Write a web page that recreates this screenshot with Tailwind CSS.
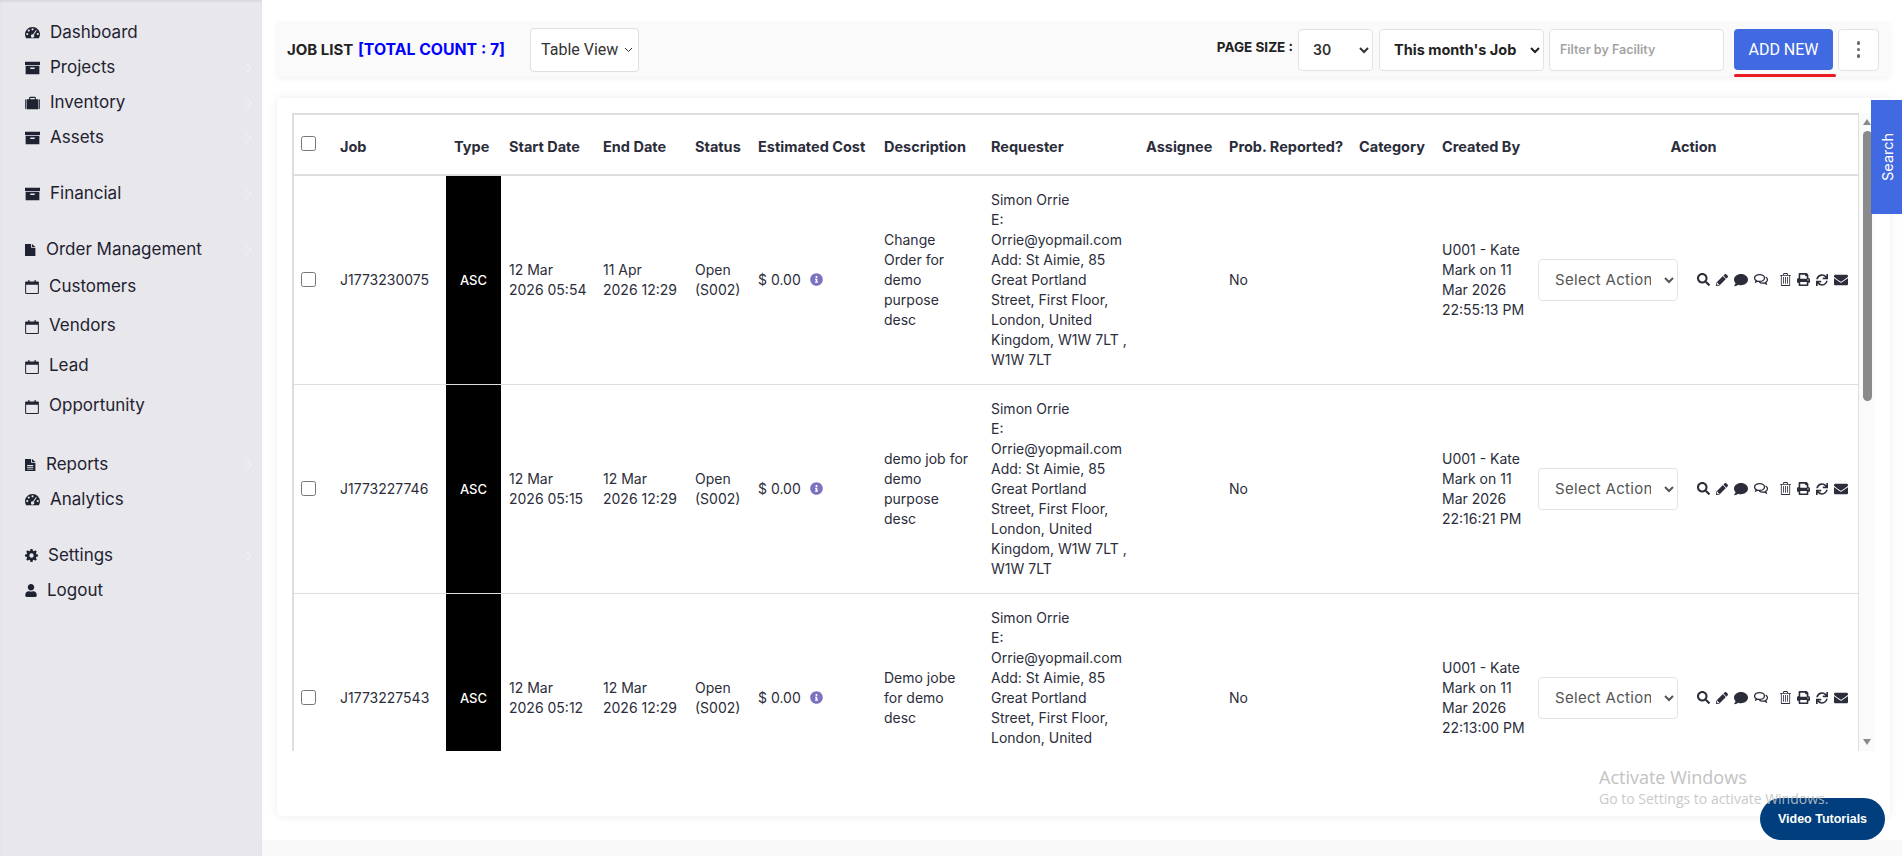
<!DOCTYPE html>
<html>
<head>
<meta charset="UTF-8" />
<title>Job List</title>
<script src="https://cdn.jsdelivr.net/npm/@tailwindcss/browser@4"></script>
</head>
<body class="h-[856px] w-[1902px] overflow-hidden bg-[#f9f9f9] font-['Inter',sans-serif] text-[#212529]">

<svg class="hidden">
  <symbol id="i-dash" viewBox="0 0 24 20"><path fill-rule="evenodd" d="M12 1C5.400 1 0 6.300 0 12.800c0 2.300.7 4.400 1.800 6.200h20.400c1.100-1.800 1.800-3.900 1.800-6.200C24 6.300 18.600 1 12 1zM12 3.200a1.700 1.700 0 1 1 0 3.400 1.700 1.700 0 0 1 0-3.400zM6 5.200a1.700 1.700 0 1 1 0 3.400 1.700 1.700 0 0 1 0-3.400zM3.600 10.800a1.700 1.700 0 1 1 0 3.400 1.700 1.700 0 0 1 0-3.400zM20.400 10.800a1.700 1.700 0 1 1 0 3.400 1.700 1.700 0 0 1 0-3.400zM17.600 5.800l1.200.8-4.700 7.400a2.600 2.600 0 1 1-1.500-.9z"/></symbol>
  <symbol id="i-archive" viewBox="0 0 24 22"><path fill-rule="evenodd" d="M0 1h24v5H0zM1 7.500h22V21H1zM8.500 10v2.500h7V10z"/></symbol>
  <symbol id="i-case" viewBox="0 0 24 22"><path fill-rule="evenodd" d="M8 1h8l1.500 1.500V5H21.500V21h-19V5H6.500V2.500zM8.300 2.800V5h7.400V2.800zM0 6.500C0 5.700.6 5 1.300 5v16C.6 21 0 20.300 0 19.500zM22.700 5C23.400 5 24 5.700 24 6.500v13c0 .8-.6 1.500-1.300 1.500z"/></symbol>
  <symbol id="i-file" viewBox="0 0 18 22"><path d="M0 1h10v6.500h7V21H0zM11.500 1L17 6h-5.500z"/></symbol>
  <symbol id="i-filet" viewBox="0 0 18 22"><path fill-rule="evenodd" d="M0 1h10v6.500h7V21H0zM3.500 11v1.500h10V11zM3.500 14v1.500h10V14zM3.500 17v1.500h10V17zM11.500 1L17 6h-5.500z"/></symbol>
  <symbol id="i-cal" viewBox="0 0 22 24"><path fill-rule="evenodd" d="M1.500 4H5V1.500h2V4h8V1.500h2V4h3.500C21.300 4 22 4.700 22 5.500v17c0 .8-.7 1.500-1.500 1.500h-19C.7 24 0 23.300 0 22.500v-17C0 4.700.7 4 1.500 4zM1.600 9v13.400h18.800V9z"/></symbol>
  <symbol id="i-cog" viewBox="0 0 512 512"><path fill-rule="evenodd" d="M215 0h82l12 66 44 18 55-38 58 58-38 55 18 44 66 12v82l-66 12-18 44 38 55-58 58-55-38-44 18-12 66h-82l-12-66-44-18-55 38-58-58 38-55-18-44-66-12v-82l66-12 18-44-38-55 58-58 55 38 44-18zM256 170a86 86 0 1 0 0 172 86 86 0 0 0 0-172z"/></symbol>
  <symbol id="i-user" viewBox="0 0 448 512"><path d="M224 256c70.700 0 128-57.300 128-128S294.700 0 224 0 96 57.300 96 128s57.300 128 128 128zm89.600 32h-16.700c-22.200 10.200-46.900 16-72.900 16s-50.600-5.800-72.900-16h-16.700C60.200 288 0 348.200 0 422.400V464c0 26.500 21.500 48 48 48h352c26.500 0 48-21.500 48-48v-41.600c0-74.200-60.200-134.400-134.400-134.400z"/></symbol>
  <symbol id="i-search" viewBox="0 0 512 512"><path d="M505 442.700L405.300 343c-4.500-4.500-10.600-7-17-7H372c27.600-35.300 44-79.700 44-128C416 93.100 322.900 0 208 0S0 93.100 0 208s93.100 208 208 208c48.300 0 92.700-16.400 128-44v16.300c0 6.400 2.500 12.500 7 17l99.700 99.700c9.400 9.400 24.600 9.400 33.900 0l28.300-28.300c9.400-9.400 9.400-24.600.1-34zM208 336c-70.700 0-128-57.200-128-128 0-70.700 57.200-128 128-128 70.700 0 128 57.200 128 128 0 70.700-57.200 128-128 128z"/></symbol>
  <symbol id="i-pencil" viewBox="0 0 512 512"><path fill-rule="evenodd" d="M497.900 142.100l-46.100 46.100c-4.700 4.700-12.300 4.700-17 0l-111-111c-4.700-4.700-4.700-12.300 0-17l46.100-46.100c18.700-18.700 49.100-18.700 67.900 0l60.100 60.100c18.800 18.700 18.800 49.100 0 67.900zM284.200 99.800L21.600 362.400.4 483.900c-2.900 16.400 11.400 30.600 27.800 27.800l121.500-21.300 262.600-262.600c4.700-4.700 4.700-12.300 0-17l-111-111c-4.800-4.700-12.400-4.700-17.100 0zM88 424h48v36l-64.500 11.300-31.100-31.100L51.700 376H88z"/></symbol>
  <symbol id="i-comment" viewBox="0 0 512 512"><path d="M256 32C114.600 32 0 125.100 0 240c0 49.600 21.400 95 57 130.700C44.500 421.100 2.700 466 2.200 466.500c-2.200 2.300-2.800 5.700-1.500 8.700S4.800 480 8 480c66.300 0 116-31.800 140.600-51.400 32.700 12.300 69 19.400 107.400 19.400 141.400 0 256-93.100 256-208S397.400 32 256 32z"/></symbol>
  <symbol id="i-comments" viewBox="0 0 24 22"><path fill="none" stroke="currentColor" stroke-width="2.200" d="M9.500 2.500C4.800 2.500 1 5.100 1 8.400c0 1.800 1.100 3.400 2.900 4.500L3 15.300l3.200-1.500c1 .3 2.100.5 3.300.5 4.700 0 8.500-2.600 8.500-5.900s-3.800-5.900-8.500-5.900z"/><path fill="none" stroke="currentColor" stroke-width="2.200" d="M20 6.800c1.800 1.100 3 2.700 3 4.500 0 1.800-1.100 3.400-2.900 4.500l.9 2.700-3.500-1.800c-3 .8-6.300.3-8.500-1.100"/></symbol>
  <symbol id="i-trash" viewBox="0 0 20 24"><path fill-rule="evenodd" d="M6.500 0h7L15 3.500h5V5h-1.500v17c0 1.100-.9 2-2 2h-13c-1.100 0-2-.9-2-2V5H0V3.500h5zM7 3.500h6l-.7-1.800H7.700zM3 5v17.300h14V5zM5.500 7.500H7V20H5.500zM9.300 7.500h1.500V20H9.300zM13 7.500h1.500V20H13z"/></symbol>
  <symbol id="i-print" viewBox="0 0 512 512"><path d="M448 192V77.250c0-8.490-3.370-16.620-9.370-22.630L393.370 9.370c-6-6-14.140-9.370-22.630-9.370H96C78.330 0 64 14.330 64 32v160c-35.350 0-64 28.650-64 64v112c0 8.840 7.160 16 16 16h48v96c0 17.670 14.330 32 32 32h320c17.670 0 32-14.330 32-32v-96h48c8.840 0 16-7.160 16-16V256c0-35.350-28.650-64-64-64zm-64 256H128v-96h256v96zm0-224H128V64h192v48c0 8.840 7.160 16 16 16h48v96zm48 72c-13.250 0-24-10.750-24-24 0-13.260 10.750-24 24-24s24 10.740 24 24c0 13.250-10.750 24-24 24z"/></symbol>
  <symbol id="i-sync" viewBox="0 0 512 512"><path d="M440.650 12.570l4 82.770A247.160 247.160 0 0 0 255.830 8C134.730 8 33.910 94.920 12.290 209.820A12 12 0 0 0 24.090 224h49.050a12 12 0 0 0 11.670-9.260 175.910 175.910 0 0 1 317-56.940l-101.460-4.860a12 12 0 0 0-12.570 12v47.410a12 12 0 0 0 12 12H500a12 12 0 0 0 12-12V12a12 12 0 0 0-12-12h-47.370a12 12 0 0 0-11.980 12.570zM255.830 432a175.610 175.610 0 0 1-146-77.800l101.800 4.870a12 12 0 0 0 12.570-12v-47.400a12 12 0 0 0-12-12H12a12 12 0 0 0-12 12V500a12 12 0 0 0 12 12h47.350a12 12 0 0 0 12-12.600l-4.150-82.570A247.170 247.170 0 0 0 255.830 504c121.110 0 221.930-86.920 243.550-201.820a12 12 0 0 0-11.800-14.180h-49.050a12 12 0 0 0-11.670 9.260A175.860 175.860 0 0 1 255.830 432z"/></symbol>
  <symbol id="i-mail" viewBox="0 0 512 512"><path d="M502.300 190.800c3.900-3.100 9.700-.2 9.700 4.700V400c0 26.500-21.500 48-48 48H48c-26.500 0-48-21.500-48-48V195.600c0-5 5.700-7.800 9.700-4.700 22.400 17.400 52.100 39.500 154.100 113.600 21.100 15.400 56.700 47.800 92.200 47.600 35.700.3 72-32.800 92.300-47.600 102-74.100 131.600-96.300 154-113.700zM256 320c23.200.4 56.600-29.200 73.400-41.400 132.700-96.300 142.800-104.700 173.400-128.700 5.800-4.500 9.200-11.500 9.200-18.900v-19c0-26.500-21.500-48-48-48H48C21.500 64 0 85.500 0 112v19c0 7.400 3.400 14.300 9.200 18.900 30.600 23.900 40.700 32.400 173.400 128.700 16.800 12.200 50.200 41.800 73.400 41.400z"/></symbol>
  <symbol id="i-info" viewBox="0 0 512 512"><path d="M256 8C119 8 8 119 8 256s111 248 248 248 248-111 248-248S393 8 256 8zm0 110c23.200 0 42 18.800 42 42s-18.800 42-42 42-42-18.800-42-42 18.800-42 42-42zm56 254c0 6.600-5.400 12-12 12h-88c-6.600 0-12-5.400-12-12v-24c0-6.600 5.400-12 12-12h12v-64h-12c-6.600 0-12-5.400-12-12v-24c0-6.600 5.400-12 12-12h64c6.600 0 12 5.400 12 12v100h12c6.600 0 12 5.400 12 12v24z"/></symbol>
  <symbol id="i-chev" viewBox="0 0 8 16"><path fill="none" stroke="currentColor" d="M1 2l6 6-6 6"/></symbol>
</svg>

<div class="flex h-full">
  <!-- sidebar -->
  <aside class="w-[262px] h-full shrink-0 bg-[#e7e7ec] pt-[15px] pl-[25px] pr-[10px] text-[17px] text-[#1f2230] shadow-[inset_0_2px_2px_rgba(0,0,0,0.06)]">
    <a class="flex items-center h-[35px]"><svg class="w-[15px] h-[13px] fill-current mr-[10px]"><use href="#i-dash"/></svg>Dashboard</a>
    <a class="flex items-center h-[35px]"><svg class="w-[15px] h-[14px] fill-current mr-[10px]"><use href="#i-archive"/></svg>Projects<svg class="w-[7px] h-[14px] ml-auto text-white/70"><use href="#i-chev"/></svg></a>
    <a class="flex items-center h-[35px]"><svg class="w-[15px] h-[14px] fill-current mr-[10px]"><use href="#i-case"/></svg>Inventory<svg class="w-[7px] h-[14px] ml-auto text-white/70"><use href="#i-chev"/></svg></a>
    <a class="flex items-center h-[35px]"><svg class="w-[15px] h-[14px] fill-current mr-[10px]"><use href="#i-archive"/></svg>Assets<svg class="w-[7px] h-[14px] ml-auto text-white/70"><use href="#i-chev"/></svg></a>
    <a class="flex items-center h-[35px] mt-[21px]"><svg class="w-[15px] h-[14px] fill-current mr-[10px]"><use href="#i-archive"/></svg>Financial<svg class="w-[7px] h-[14px] ml-auto text-white/70"><use href="#i-chev"/></svg></a>
    <a class="flex items-center h-[35px] mt-[21px]"><svg class="w-[11px] h-[14px] fill-current mr-[10px]"><use href="#i-file"/></svg>Order Management<svg class="w-[7px] h-[14px] ml-auto text-white/70"><use href="#i-chev"/></svg></a>
    <a class="flex items-center h-[39px]"><svg class="w-[14px] h-[15px] fill-current mr-[10px]"><use href="#i-cal"/></svg>Customers</a>
    <a class="flex items-center h-[40px]"><svg class="w-[14px] h-[15px] fill-current mr-[10px]"><use href="#i-cal"/></svg>Vendors</a>
    <a class="flex items-center h-[40px]"><svg class="w-[14px] h-[15px] fill-current mr-[10px]"><use href="#i-cal"/></svg>Lead</a>
    <a class="flex items-center h-[40px]"><svg class="w-[14px] h-[15px] fill-current mr-[10px]"><use href="#i-cal"/></svg>Opportunity</a>
    <a class="flex items-center h-[35px] mt-[21px]"><svg class="w-[11px] h-[14px] fill-current mr-[10px]"><use href="#i-filet"/></svg>Reports<svg class="w-[7px] h-[14px] ml-auto text-white/70"><use href="#i-chev"/></svg></a>
    <a class="flex items-center h-[35px]"><svg class="w-[15px] h-[13px] fill-current mr-[10px]"><use href="#i-dash"/></svg>Analytics</a>
    <a class="flex items-center h-[35px] mt-[21px]"><svg class="w-[13px] h-[13px] fill-current mr-[10px]"><use href="#i-cog"/></svg>Settings<svg class="w-[7px] h-[14px] ml-auto text-white/70"><use href="#i-chev"/></svg></a>
    <a class="flex items-center h-[35px]"><svg class="w-[12px] h-[13px] fill-current mr-[10px]"><use href="#i-user"/></svg>Logout</a>
  </aside>

  <!-- main -->
  <main class="relative flex-1 h-[840px] bg-white pt-[22px] pl-[15px] pr-[12px]">
    <div class="h-[55px] bg-[#fafafa] rounded-[3px] shadow-[0_2px_6px_rgba(0,0,0,0.05)] flex items-center pl-[10px] pr-[11px]">
      <h1 class="text-[15px] font-bold text-[#222] whitespace-nowrap">JOB LIST <span class="text-[#0000ff] text-[15.800px] ml-[1px]">[TOTAL COUNT : 7]</span></h1>
      <div class="relative ml-[25px] w-[109px] h-[44px]">
        <select class="appearance-none w-full h-full bg-white border border-[#e0e0e0] rounded-[4px] pl-[10px] text-[16px] font-['Roboto',sans-serif] text-[#333]"><option>Table View</option></select>
        <svg class="absolute right-[6px] top-[19px] w-[9px] h-[6px] text-[#333]" viewBox="0 0 9 6"><path fill="none" stroke="currentColor" d="M1 1l3.500 3.500L8 1"/></svg>
      </div>
      <span class="ml-auto text-[13.500px] font-bold text-[#222] mb-[4px] whitespace-nowrap">PAGE SIZE :</span>
      <select class="ml-[5px] w-[75px] h-[42px] bg-white border border-[#e3e3e3] rounded-[4px] pl-[10px] text-[14px] font-semibold text-[#333]"><option>30</option></select>
      <select class="ml-[6px] w-[165px] h-[42px] bg-white border border-[#e3e3e3] rounded-[4px] pl-[10px] text-[14.500px] font-bold text-[#222]"><option>This month's Job</option></select>
      <input class="ml-[5px] w-[175px] h-[42px] bg-white border border-[#e3e3e3] rounded-[4px] pl-[10px] text-[12.500px] font-semibold placeholder:text-[#a3a3a3]" placeholder="Filter by Facility" />
      <div class="relative ml-[10px]">
        <button class="w-[99px] h-[41px] bg-[#4169e1] text-white text-[16px] font-['Roboto',sans-serif] rounded-[4px]">ADD NEW</button>
        <div class="absolute left-0 top-[45px] w-[102px] h-[3px] rounded-full bg-[#ed1c24]"></div>
      </div>
      <button class="ml-[5px] w-[41px] h-[42px] bg-white border border-[#e3e3e3] rounded-[4px] flex flex-col items-center justify-center gap-[3px]">
        <span class="w-[3.500px] h-[3.500px] rounded-full bg-[#666]"></span><span class="w-[3.500px] h-[3.500px] rounded-full bg-[#666]"></span><span class="w-[3.500px] h-[3.500px] rounded-full bg-[#666]"></span>
      </button>
    </div>

    <div class="mt-[21px] h-[718px] bg-white rounded-[4px] shadow-[0_0_10px_rgba(0,0,0,0.08)] pt-[15px] pl-[15px]">
      <div class="flex h-[638px]">
        <div class="w-[1567px] h-full overflow-hidden border-t-2 border-l-2 border-[#dedede] border-r border-r-[#dedede]">
          <table class="table-fixed w-[1565px] border-collapse text-[14px] leading-[20px] text-[#2b2d3a]">
            <colgroup>
              <col class="w-[38px]"><col class="w-[114px]"><col class="w-[55px]"><col class="w-[94px]"><col class="w-[92px]"><col class="w-[63px]"><col class="w-[126px]"><col class="w-[107px]"><col class="w-[155px]"><col class="w-[83px]"><col class="w-[130px]"><col class="w-[83px]"><col class="w-[96px]"><col>
            </colgroup>
            <thead>
              <tr class="h-[60px] border-b-2 border-[#dedede] text-left text-[14.500px] font-bold text-[#2b2d3a] whitespace-nowrap">
                <th class="pl-[7px]"><input type="checkbox" class="block w-[15px] h-[15px] -mt-[2px]"></th>
                <th class="px-[8px] pt-[4px]">Job</th>
                <th class="pl-[8px] pt-[4px]">Type</th>
                <th class="pl-[8px] pt-[4px]">Start Date</th>
                <th class="pl-[8px] pt-[4px]">End Date</th>
                <th class="pl-[8px] pt-[4px]">Status</th>
                <th class="pl-[8px] pt-[4px]">Estimated Cost</th>
                <th class="pl-[8px] pt-[4px]">Description</th>
                <th class="pl-[8px] pt-[4px]">Requester</th>
                <th class="pl-[8px] pt-[4px]">Assignee</th>
                <th class="pl-[8px] pt-[4px]">Prob. Reported?</th>
                <th class="pl-[8px] pt-[4px]">Category</th>
                <th class="pl-[8px] pt-[4px]">Created By</th>
                <th class="text-center pt-[4px] pr-[2px]">Action</th>
              </tr>
            </thead>
            <tbody>
              <tr class="h-[209px] border-b border-[#dedede]">
                <td class="pl-[7px]"><input type="checkbox" class="block w-[15px] h-[15px]"></td>
                <td class="px-[8px]">J1773230075</td>
                <td class="bg-black text-white text-center font-medium text-[13px]">ASC</td>
                <td class="pl-[8px] whitespace-nowrap">12 Mar<br>2026 05:54</td>
                <td class="pl-[8px] whitespace-nowrap">11 Apr<br>2026 12:29</td>
                <td class="pl-[8px]">Open<br>(S002)</td>
                <td class="px-[8px] whitespace-nowrap">$ 0.00 <svg class="inline-block w-[13px] h-[13px] ml-[5px] -mt-[2px] text-[#7c73c0] fill-current"><use href="#i-info"/></svg></td>
                <td class="pl-[8px] whitespace-nowrap">Change<br>Order for<br>demo<br>purpose<br>desc</td>
                <td class="pl-[8px] whitespace-nowrap">Simon Orrie<br>E:<br>Orrie@yopmail.com<br>Add: St Aimie, 85<br>Great Portland<br>Street, First Floor,<br>London, United<br>Kingdom, W1W 7LT ,<br>W1W 7LT</td>
                <td></td>
                <td class="pl-[8px]">No</td>
                <td></td>
                <td class="pl-[8px] whitespace-nowrap">U001 - Kate<br>Mark on 11<br>Mar 2026<br>22:55:13 PM</td>
                <td class="pl-[8px]">
                  <div class="flex items-center">
                    <select class="w-[140px] h-[42px] bg-white border border-[#e3e3e3] rounded-[4px] pl-[12px] pr-[10px] text-[15px] tracking-[0.3px] text-[#555]"><option>Select Actions</option></select>
                    <div class="ml-[19px] flex items-center gap-[6px] text-[#2b2d3a]">
                      <svg class="w-[13px] h-[13px] fill-current"><use href="#i-search"/></svg><svg class="w-[12px] h-[12px] fill-current"><use href="#i-pencil"/></svg><svg class="w-[14px] h-[14px] fill-current"><use href="#i-comment"/></svg><svg class="w-[14px] h-[13px] mr-[6px]"><use href="#i-comments"/></svg><svg class="w-[11px] h-[13px] fill-current"><use href="#i-trash"/></svg><svg class="w-[13px] h-[13px] fill-current"><use href="#i-print"/></svg><svg class="w-[12px] h-[12px] fill-current"><use href="#i-sync"/></svg><svg class="w-[14px] h-[14px] fill-current"><use href="#i-mail"/></svg>
                    </div>
                  </div>
                </td>
              </tr>
              <tr class="h-[209px] border-b border-[#dedede]">
                <td class="pl-[7px]"><input type="checkbox" class="block w-[15px] h-[15px]"></td>
                <td class="px-[8px]">J1773227746</td>
                <td class="bg-black text-white text-center font-medium text-[13px]">ASC</td>
                <td class="pl-[8px] whitespace-nowrap">12 Mar<br>2026 05:15</td>
                <td class="pl-[8px] whitespace-nowrap">12 Mar<br>2026 12:29</td>
                <td class="pl-[8px]">Open<br>(S002)</td>
                <td class="px-[8px] whitespace-nowrap">$ 0.00 <svg class="inline-block w-[13px] h-[13px] ml-[5px] -mt-[2px] text-[#7c73c0] fill-current"><use href="#i-info"/></svg></td>
                <td class="pl-[8px] whitespace-nowrap">demo job for<br>demo<br>purpose<br>desc</td>
                <td class="pl-[8px] whitespace-nowrap">Simon Orrie<br>E:<br>Orrie@yopmail.com<br>Add: St Aimie, 85<br>Great Portland<br>Street, First Floor,<br>London, United<br>Kingdom, W1W 7LT ,<br>W1W 7LT</td>
                <td></td>
                <td class="pl-[8px]">No</td>
                <td></td>
                <td class="pl-[8px] whitespace-nowrap">U001 - Kate<br>Mark on 11<br>Mar 2026<br>22:16:21 PM</td>
                <td class="pl-[8px]">
                  <div class="flex items-center">
                    <select class="w-[140px] h-[42px] bg-white border border-[#e3e3e3] rounded-[4px] pl-[12px] pr-[10px] text-[15px] tracking-[0.3px] text-[#555]"><option>Select Actions</option></select>
                    <div class="ml-[19px] flex items-center gap-[6px] text-[#2b2d3a]">
                      <svg class="w-[13px] h-[13px] fill-current"><use href="#i-search"/></svg><svg class="w-[12px] h-[12px] fill-current"><use href="#i-pencil"/></svg><svg class="w-[14px] h-[14px] fill-current"><use href="#i-comment"/></svg><svg class="w-[14px] h-[13px] mr-[6px]"><use href="#i-comments"/></svg><svg class="w-[11px] h-[13px] fill-current"><use href="#i-trash"/></svg><svg class="w-[13px] h-[13px] fill-current"><use href="#i-print"/></svg><svg class="w-[12px] h-[12px] fill-current"><use href="#i-sync"/></svg><svg class="w-[14px] h-[14px] fill-current"><use href="#i-mail"/></svg>
                    </div>
                  </div>
                </td>
              </tr>
              <tr class="h-[209px] border-b border-[#dedede]">
                <td class="pl-[7px]"><input type="checkbox" class="block w-[15px] h-[15px]"></td>
                <td class="px-[8px]">J1773227543</td>
                <td class="bg-black text-white text-center font-medium text-[13px]">ASC</td>
                <td class="pl-[8px] whitespace-nowrap">12 Mar<br>2026 05:12</td>
                <td class="pl-[8px] whitespace-nowrap">12 Mar<br>2026 12:29</td>
                <td class="pl-[8px]">Open<br>(S002)</td>
                <td class="px-[8px] whitespace-nowrap">$ 0.00 <svg class="inline-block w-[13px] h-[13px] ml-[5px] -mt-[2px] text-[#7c73c0] fill-current"><use href="#i-info"/></svg></td>
                <td class="pl-[8px] whitespace-nowrap">Demo jobe<br>for demo<br>desc</td>
                <td class="pl-[8px] whitespace-nowrap">Simon Orrie<br>E:<br>Orrie@yopmail.com<br>Add: St Aimie, 85<br>Great Portland<br>Street, First Floor,<br>London, United<br>Kingdom, W1W 7LT ,<br>W1W 7LT</td>
                <td></td>
                <td class="pl-[8px]">No</td>
                <td></td>
                <td class="pl-[8px] whitespace-nowrap">U001 - Kate<br>Mark on 11<br>Mar 2026<br>22:13:00 PM</td>
                <td class="pl-[8px]">
                  <div class="flex items-center">
                    <select class="w-[140px] h-[42px] bg-white border border-[#e3e3e3] rounded-[4px] pl-[12px] pr-[10px] text-[15px] tracking-[0.3px] text-[#555]"><option>Select Actions</option></select>
                    <div class="ml-[19px] flex items-center gap-[6px] text-[#2b2d3a]">
                      <svg class="w-[13px] h-[13px] fill-current"><use href="#i-search"/></svg><svg class="w-[12px] h-[12px] fill-current"><use href="#i-pencil"/></svg><svg class="w-[14px] h-[14px] fill-current"><use href="#i-comment"/></svg><svg class="w-[14px] h-[13px] mr-[6px]"><use href="#i-comments"/></svg><svg class="w-[11px] h-[13px] fill-current"><use href="#i-trash"/></svg><svg class="w-[13px] h-[13px] fill-current"><use href="#i-print"/></svg><svg class="w-[12px] h-[12px] fill-current"><use href="#i-sync"/></svg><svg class="w-[14px] h-[14px] fill-current"><use href="#i-mail"/></svg>
                    </div>
                  </div>
                </td>
              </tr>
            </tbody>
          </table>
        </div>
        <!-- scrollbar -->
        <div class="w-[16px] h-full bg-[#fafafa] flex flex-col items-center pt-[6px] pb-[6px]">
          <div class="w-0 h-0 border-x-[4px] border-x-transparent border-b-[6px] border-b-[#8a8a8a]"></div>
          <div class="w-[9px] h-[270px] mt-[6px] rounded-full bg-[#8a8a8a]"></div>
          <div class="mt-auto w-0 h-0 border-x-[4px] border-x-transparent border-t-[6px] border-t-[#8a8a8a]"></div>
        </div>
      </div>
    </div>

    <!-- overlays -->
    <button class="absolute right-0 top-[100px] w-[31px] h-[114px] bg-[#4169e1] text-white text-[14.500px] pl-[3px] flex items-center justify-center"><span class="block -rotate-90">Search</span></button>
    <button class="absolute left-[1498px] top-[798px] w-[125px] h-[42px] rounded-full bg-[#003e7e] text-white text-[12.500px] font-bold font-['Liberation_Sans',sans-serif]">Video Tutorials</button>
    <div class="absolute left-[1337px] top-[765px] text-[#c2c2c2] font-['Open_Sans',sans-serif] pointer-events-none">
      <p class="text-[18px] leading-[24px]">Activate Windows</p>
      <p class="text-[14px] leading-[20px] text-[#c2c2c2]/90">Go to Settings to activate Windows.</p>
    </div>
  </main>
</div>
</body>
</html>
